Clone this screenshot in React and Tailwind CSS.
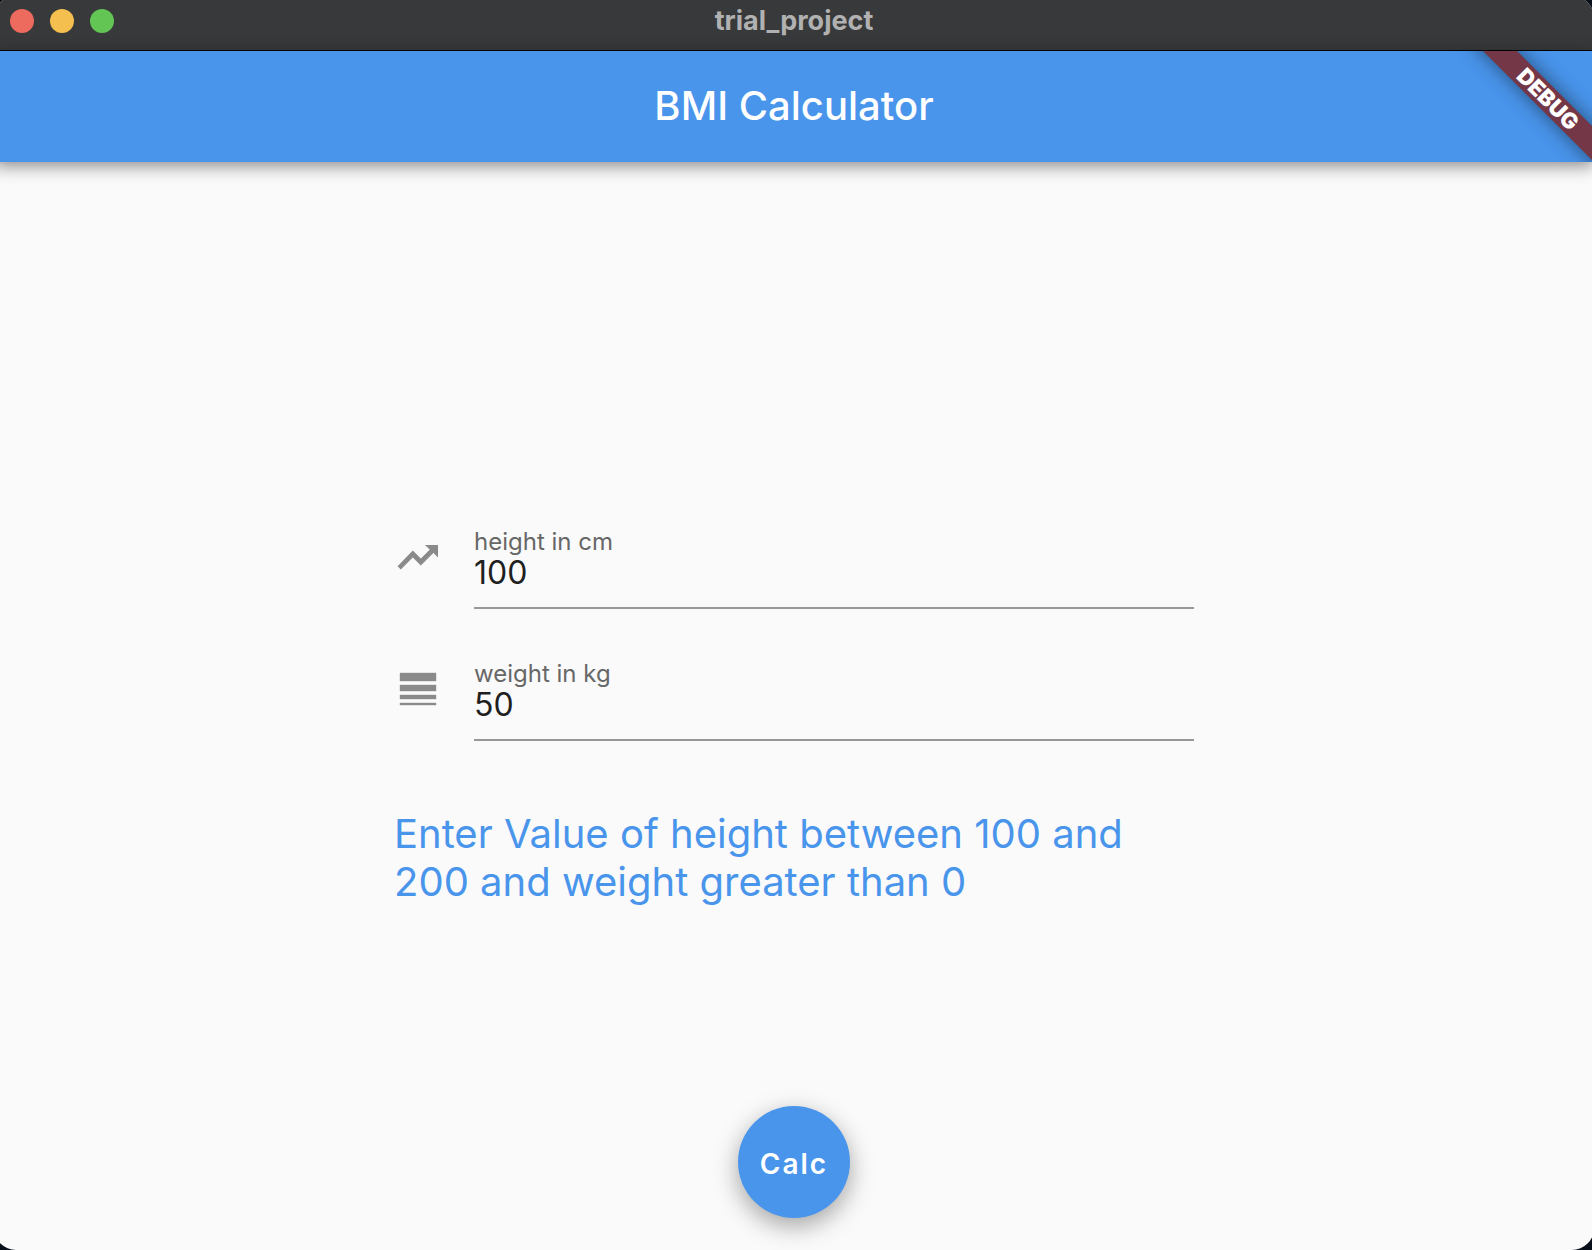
import { useState } from "react";

function TrendingUpIcon() {
  return (
    <svg viewBox="0 0 24 24" aria-hidden="true" className="mt-0.5 size-12 shrink-0 text-[#8a8a8a]">
      <path
        fill="currentColor"
        stroke="currentColor"
        strokeWidth="0.6"
        d="M16.2 6.3l2.09 1.99-4.88 4.88-4-4L2.2 16.59 3.41 17.8l6-6 4 4 6.3-6.29L21.7 11.5V6.3z"
      />
    </svg>
  );
}

function LineWeightIcon() {
  return (
    <svg viewBox="0 0 24 24" aria-hidden="true" className="mt-0.5 size-12 shrink-0 text-[#8a8a8a]">
      <path
        fill="currentColor"
        stroke="currentColor"
        strokeWidth="0.2"
        d="M3 17h18v-2H3v2zm0 3h18v-1H3v1zm0-7h18v-3H3v3zm0-9v4h18V4H3z"
      />
    </svg>
  );
}

function TitleBar() {
  return (
    <div className="relative flex h-[55px] items-center justify-center border-b border-black bg-[#38393a] pb-1">
      <div className="absolute left-4 flex gap-4">
        <button aria-label="Close" className="size-6 rounded-full bg-[#ed6a5f]" />
        <button aria-label="Minimize" className="size-6 rounded-full bg-[#f5bf4f]" />
        <button aria-label="Zoom" className="size-6 rounded-full bg-[#62c554]" />
      </div>
      <span className="text-[27px] leading-8 font-bold text-[#b1b1b2]">trial_project</span>
    </div>
  );
}

function DebugBanner() {
  return (
    <div className="pointer-events-none absolute top-0 right-0 size-full overflow-hidden">
      <div className="absolute top-9 -right-[50px] flex h-6 w-[192px] rotate-45 items-center justify-center bg-[#733747] text-[22px] font-black text-white shadow-[0_0_20px_rgba(0,0,0,0.5)]">
        DEBUG
      </div>
    </div>
  );
}

function Field({ id, label, icon: Icon, value, onChange }) {
  return (
    <div className="flex items-center gap-8">
      <Icon />
      <div className="flex flex-1 flex-col border-b-2 border-[#989898] pt-[27px] pb-[15px]">
        <label htmlFor={id} className="text-[24px] leading-6 text-[#676767]">
          {label}
        </label>
        <input
          id={id}
          inputMode="numeric"
          value={value}
          onChange={(event) => onChange(event.target.value)}
          className="h-[38px] w-full bg-transparent text-[32px] leading-[38px] text-[#1f1f1f] outline-none"
        />
      </div>
    </div>
  );
}

export default function App() {
  const [height, setHeight] = useState("100");
  const [weight, setWeight] = useState("50");

  return (
    <div className="min-h-screen overflow-hidden bg-[#0a1019] font-['Inter',sans-serif]">
      <div className="-mt-1 -mr-0.5 -ml-1.5 flex min-h-[calc(100vh+4px)] flex-col overflow-hidden rounded-[22px] bg-[#fafafa]">
        <TitleBar />
        <header className="relative flex h-[111px] items-center justify-center bg-[#4995ec] pb-0.5 shadow-[0_4px_16px_rgba(0,0,0,0.45)]">
          <h1 className="text-[40px] leading-[48px] font-medium text-white">BMI Calculator</h1>
          <DebugBanner />
        </header>
        <main className="relative flex flex-1 flex-col items-center justify-center pb-1">
          <div className="flex w-1/2 flex-col">
            <div className="flex flex-col gap-[26px]">
              <Field id="height" label="height in cm" icon={TrendingUpIcon} value={height} onChange={setHeight} />
              <Field id="weight" label="weight in kg" icon={LineWeightIcon} value={weight} onChange={setWeight} />
            </div>
            <p className="mt-[69px] text-[40px] leading-[48px] text-[#4995ec]">
              Enter Value of height between 100 and 200 and weight greater than 0
            </p>
          </div>
          <button className="absolute bottom-8 size-28 rounded-full bg-[#4995ec] pt-1 text-[28px] font-semibold tracking-[2px] text-white shadow-[0_8px_24px_rgba(0,0,0,0.35)]">
            Calc
          </button>
        </main>
      </div>
    </div>
  );
}
